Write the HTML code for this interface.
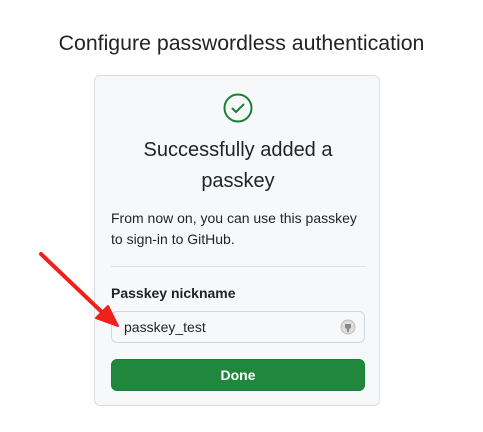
<!DOCTYPE html>
<html><head><style>
body{margin:0;width:483px;height:432px;background:#fff;font-family:"Liberation Sans",sans-serif;position:relative;overflow:hidden;color:#1f2328}
.t{position:absolute;left:0;width:483px;top:31px;text-align:center;font-size:21.3px;font-weight:300;color:#1f2328}
.card{position:absolute;left:94px;top:75px;width:286px;height:331px;background:#f6f8fa;border:1px solid #d8dee4;border-radius:6px;box-sizing:border-box}
.h{position:absolute;left:0;width:286px;top:59px;text-align:center;font-size:20px;line-height:31px}
.p{position:absolute;left:111px;top:208px;font-size:14px;line-height:21px}
.hr{position:absolute;left:111px;top:266px;width:254px;height:1px;background:#d8dee4}
.l{position:absolute;left:111px;top:285px;font-size:14px;font-weight:bold}
.in{position:absolute;left:111px;top:311px;width:254px;height:32px;border:1px solid #d0d7de;border-radius:6px;box-sizing:border-box;background:#f6f8fa;font-size:14px;padding:7px 12px}
.b{position:absolute;left:111px;top:359px;width:254px;height:32px;background:#1f883d;border:1px solid #1a7f37;border-radius:6px;box-sizing:border-box;color:#fff;font-weight:bold;font-size:14px;text-align:center;line-height:30px}
</style></head><body>
<div class="t">Configure passwordless authentication</div>
<div class="card"><div class="h">Successfully added a<br>passkey</div></div>
<svg style="position:absolute;left:222px;top:92px" width="32" height="32"><circle cx="16" cy="16" r="13.5" fill="none" stroke="#1a7f37" stroke-width="2"/><path d="M10.5 16.5l3.5 3.5 7.5-7.5" fill="none" stroke="#1a7f37" stroke-width="2" stroke-linecap="round" stroke-linejoin="round"/></svg>
<div class="p">From now on, you can use this passkey<br>to sign-in to GitHub.</div>
<div class="hr"></div>
<div class="l">Passkey nickname</div>
<div class="in">passkey_test</div>
<svg style="position:absolute;left:340px;top:319px" width="16" height="16"><circle cx="8" cy="8" r="7" fill="#ddd" stroke="#bbb"/><path d="M5 5h6v4l-2 1v3H7v-3L5 9z" fill="#888"/></svg>
<div class="b">Done</div>
<svg style="position:absolute;left:0;top:0" width="483" height="432"><line x1="41" y1="254" x2="106" y2="316" stroke="#f0201a" stroke-width="4" stroke-linecap="round"/><path d="M118 326L96 318L108 306Z" fill="#f0201a" stroke="#f0201a" stroke-width="2" stroke-linejoin="round"/></svg>
</body></html>
